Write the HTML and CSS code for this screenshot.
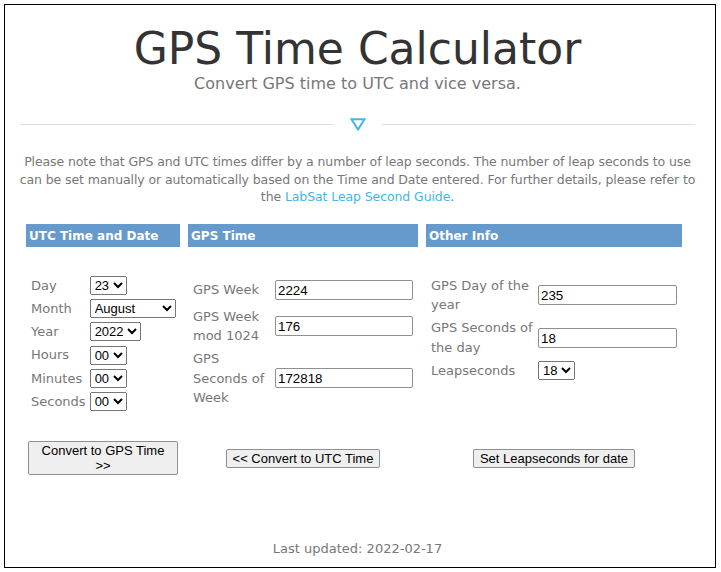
FILE: index.html
```html
<!DOCTYPE html>
<html lang="en">
<head>
<meta charset="utf-8">
<title>GPS Time Calculator</title>
<link rel="stylesheet" href="styles.css">
</head>
<body>
<div class="page">
  <h1 class="title">GPS Time Calculator</h1>
  <p class="subtitle">Convert GPS time to UTC and vice versa.</p>
  <div class="divider">
    <span class="rule"></span>
    <svg class="tri" width="16" height="13" viewBox="0 0 16 13" aria-hidden="true">
      <path d="M1.5 1.2 H14.5 L8 11.6 Z" fill="none" stroke="#45b5e8" stroke-width="2" stroke-linejoin="miter"/>
    </svg>
    <span class="rule"></span>
  </div>
  <p class="note">Please note that GPS and UTC times differ by a number of leap seconds. The number of leap seconds to use can be set manually or automatically based on the Time and Date entered. For further details, please refer to the <a href="#" class="link">LabSat Leap Second Guide</a>.</p>

  <div class="calc">
    <div class="head">UTC Time and Date</div>
    <div class="head">GPS Time</div>
    <div class="head">Other Info</div>

    <div class="fields utc">
      <label class="lbl">Day</label>
      <div class="ctl"><select class="sel"><option>23</option><option>24</option></select></div>
      <label class="lbl">Month</label>
      <div class="ctl"><select class="sel"><option>January</option><option>February</option><option>March</option><option>April</option><option>May</option><option>June</option><option>July</option><option selected>August</option><option>September</option><option>October</option><option>November</option><option>December</option></select></div>
      <label class="lbl">Year</label>
      <div class="ctl"><select class="sel"><option>2022</option></select></div>
      <label class="lbl">Hours</label>
      <div class="ctl"><select class="sel"><option>00</option><option>23</option></select></div>
      <label class="lbl">Minutes</label>
      <div class="ctl"><select class="sel"><option>00</option><option>59</option></select></div>
      <label class="lbl">Seconds</label>
      <div class="ctl"><select class="sel"><option>00</option><option>59</option></select></div>
    </div>

    <div class="fields gps">
      <label class="lbl">GPS Week</label>
      <div class="ctl"><input class="inp" type="text" value="2224"></div>
      <label class="lbl">GPS Week mod 1024</label>
      <div class="ctl"><input class="inp" type="text" value="176"></div>
      <label class="lbl">GPS Seconds of Week</label>
      <div class="ctl"><input class="inp" type="text" value="172818"></div>
    </div>

    <div class="fields other">
      <label class="lbl">GPS Day of the year</label>
      <div class="ctl"><input class="inp" type="text" value="235"></div>
      <label class="lbl">GPS Seconds of the day</label>
      <div class="ctl"><input class="inp" type="text" value="18"></div>
      <label class="lbl">Leapseconds</label>
      <div class="ctl"><select class="sel"><option>18</option><option>37</option></select></div>
    </div>

    <div class="action"><button class="btn btn-gps">Convert to GPS Time &gt;&gt;</button></div>
    <div class="action"><button class="btn">&lt;&lt; Convert to UTC Time</button></div>
    <div class="action"><button class="btn">Set Leapseconds for date</button></div>
  </div>

  <p class="footer">Last updated: 2022-02-17</p>
</div>
</body>
</html>
```

FILE: styles.css
```css
html, body {
  margin: 0;
  padding: 0;
  background: #fff;
}

body {
  font-family: "DejaVu Sans", "Open Sans", sans-serif;
}

.page {
  margin: 4px;
  width: 675px;
  height: 562px;
  border: 1px solid #000;
  padding: 0 20px 0 15px;
  box-sizing: content-box;
  display: flex;
  flex-direction: column;
}

.title {
  margin: 22px 0 0;
  font-size: 44px;
  line-height: 44px;
  font-weight: normal;
  color: #333;
  text-align: center;
}

.subtitle {
  margin: 3px 0 0;
  font-size: 16px;
  line-height: 20px;
  color: #777;
  text-align: center;
}

.divider {
  margin-top: 24px;
  height: 13px;
  display: flex;
  align-items: center;
  gap: 16px;
}

.rule {
  flex: 1;
  height: 1px;
  background: #dedede;
}

.tri {
  display: block;
}

.note {
  margin: 22px -4px 0;
  font-size: 12.5px;
  letter-spacing: -0.1px;
  line-height: 17.6px;
  color: #777;
  text-align: center;
}

.link {
  color: #45b5e8;
  text-decoration: none;
}

.calc {
  margin: 18px 0 0 6px;
  display: grid;
  grid-template-columns: 154px 230px 256px;
  column-gap: 8px;
}

.head {
  height: 23px;
  line-height: 24px;
  background: #6699cc;
  color: #fff;
  font-weight: bold;
  font-size: 12px;
  padding-left: 3px;
  white-space: nowrap;
}

.fields {
  display: grid;
  justify-content: start;
  column-gap: 4px;
  row-gap: 3.5px;
  padding-left: 5px;
  align-items: center;
  align-content: start;
}

.fields.utc {
  grid-template-columns: auto auto;
  padding-top: 29px;
  row-gap: 3.6px;
}

.fields.gps {
  grid-template-columns: 78px 138px;
  grid-template-rows: 27px auto auto;
  padding-top: 30px;
  row-gap: 3px;
}

.fields.other {
  grid-template-columns: 103px 139px;
  padding-top: 29px;
}

.lbl {
  font-size: 13px;
  line-height: 19.6px;
  color: #777;
}

.ctl {
  display: flex;
  align-items: center;
}

.sel {
  font-family: "Liberation Sans", Arial, sans-serif;
  font-size: 13px;
  color: #000;
}

.inp {
  box-sizing: border-box;
  width: 100%;
  height: 20px;
  font-family: "Liberation Sans", Arial, sans-serif;
  font-size: 13.33px;
  color: #000;
  border: 1px solid #8f8f8f;
  border-radius: 2px;
  padding: 1px 2px;
}

.action {
  display: flex;
  justify-content: center;
  align-items: center;
  padding-top: 30px;
}

.btn {
  font-family: "Liberation Sans", Arial, sans-serif;
  font-size: 13px;
  color: #000;
  background: #efefef;
  border: 1px solid #8f8f8f;
  border-radius: 2px;
  padding: 1px 6px;
}

.btn-gps {
  width: 150px;
}

.footer {
  margin: auto 0 9px;
  font-size: 13px;
  line-height: 18px;
  color: #777;
  text-align: center;
}
```
